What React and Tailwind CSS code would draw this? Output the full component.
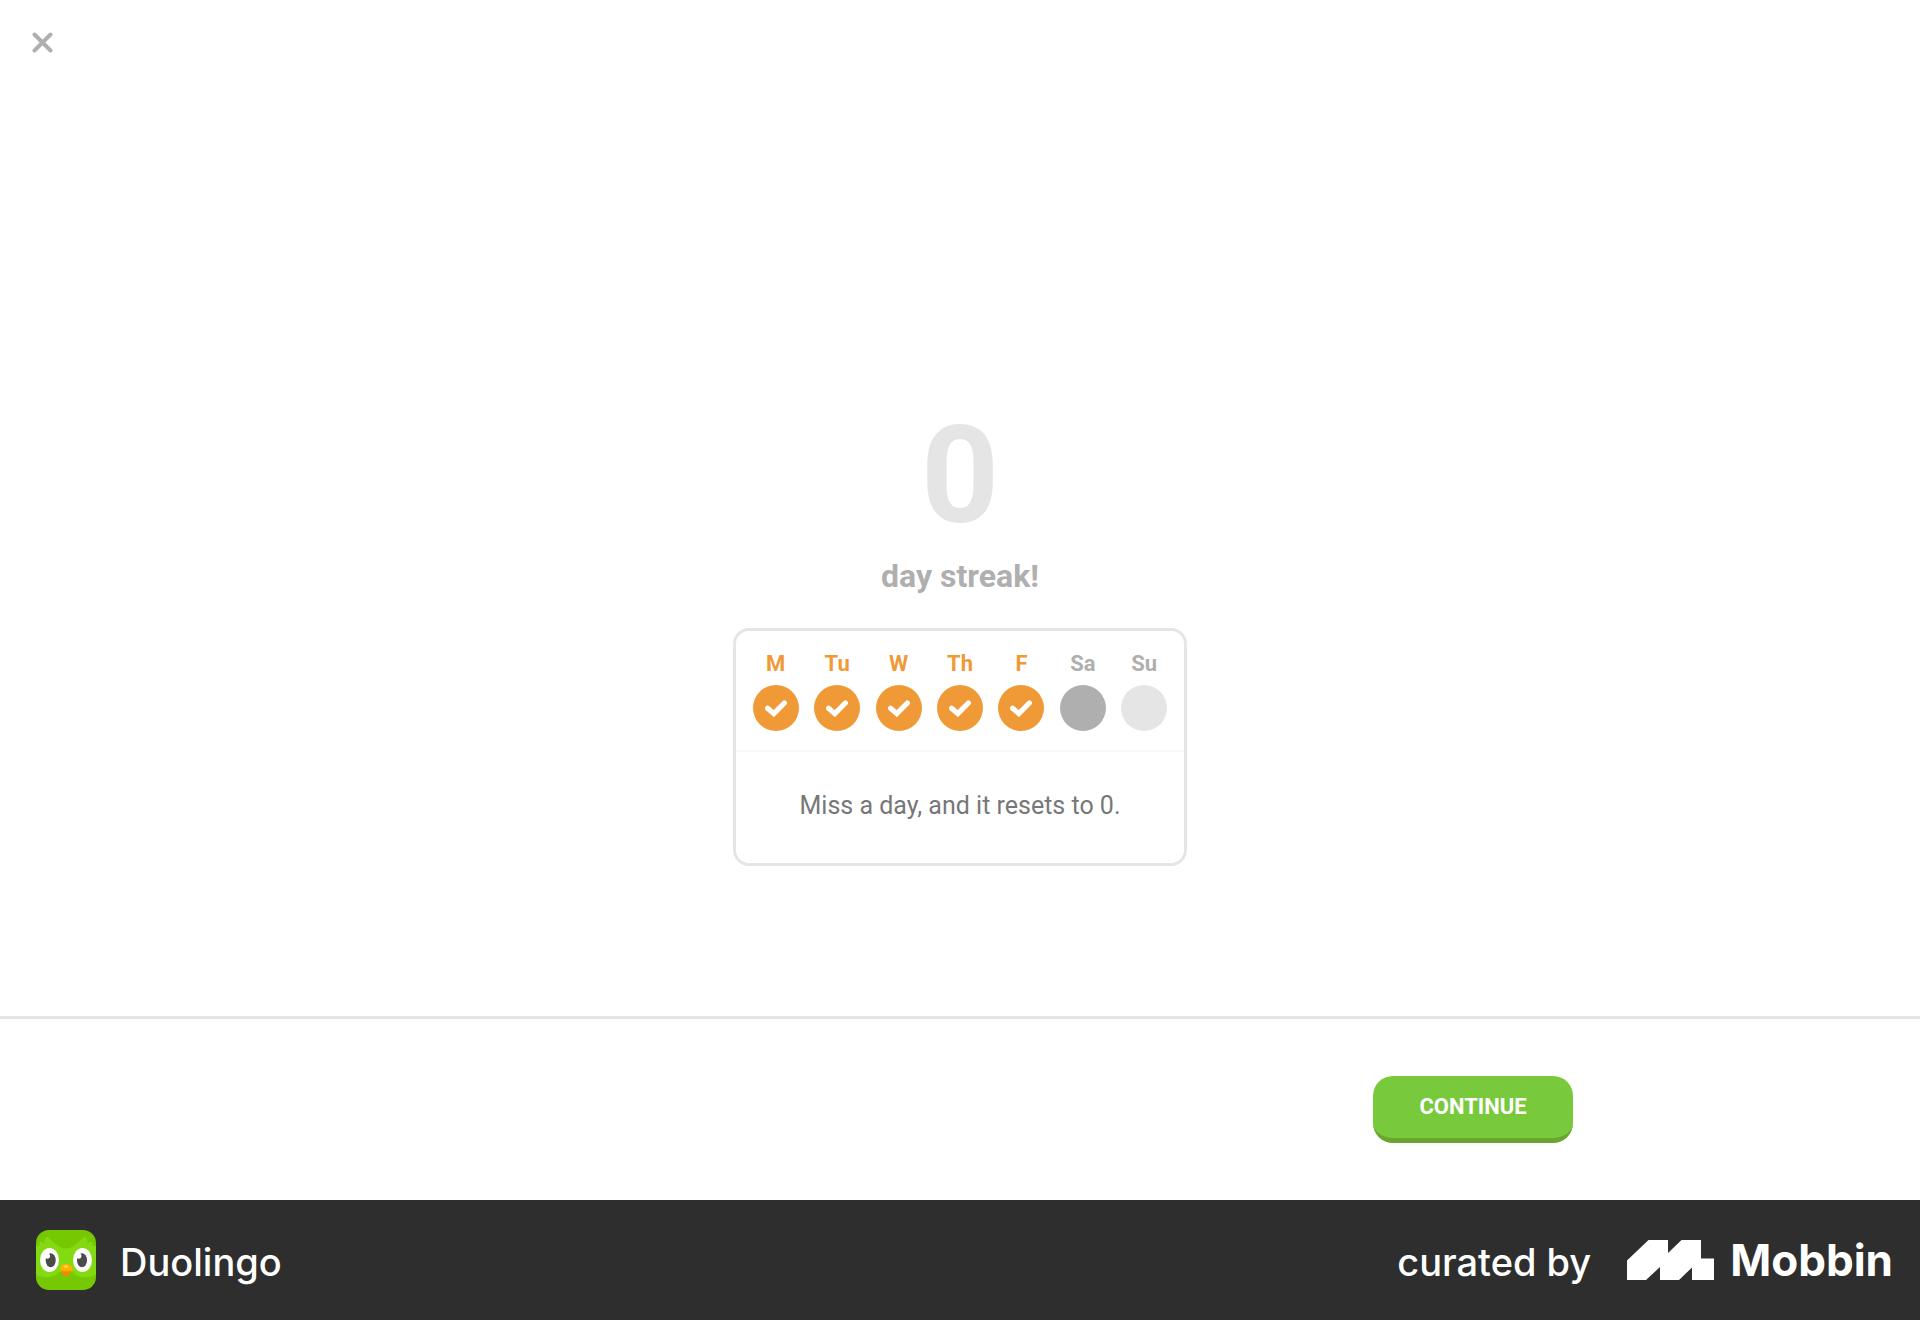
const days = [
  { label: "M", state: "done" },
  { label: "Tu", state: "done" },
  { label: "W", state: "done" },
  { label: "Th", state: "done" },
  { label: "F", state: "done" },
  { label: "Sa", state: "today" },
  { label: "Su", state: "upcoming" },
];

const labelColor = {
  done: "text-[#f09a37]",
  today: "text-[#afafaf]",
  upcoming: "text-[#afafaf]",
};

const dotColor = {
  done: "bg-[#f09a37]",
  today: "bg-[#afafaf]",
  upcoming: "bg-[#e5e5e5]",
};

function CheckMark() {
  return (
    <svg width="22" height="18" viewBox="0 0 22 18" fill="none" aria-hidden="true">
      <path d="M2.600 9.200 L8.800 14.600 L19.400 4" stroke="#fff" strokeWidth="5.200" strokeLinecap="round" />
    </svg>
  );
}

function OwlIcon() {
  return (
    <svg width="60" height="60" viewBox="0 0 60 60" aria-hidden="true">
      <defs>
        <clipPath id="owl-tile">
          <rect width="60" height="60" rx="13" />
        </clipPath>
      </defs>
      <g clipPath="url(#owl-tile)">
        <rect width="60" height="60" fill="#75c802" />
        <path
          d="M0 16 L3.5 16 C3 13 4 11 5.5 11.5 L8.5 14 C8 10 9.5 6.5 12 7 C17 11 22 18.500 30 18.500 C38 18.500 43 11 48 7 C50.500 6.500 52 10 51.500 14 L54.500 11.500 C56 11 57 13 56.500 16 L60 16 L60 44 C54 49 41 48 37 42 L23 42 C19 48 6 49 0 44 Z"
          fill="#84da10"
        />
        <ellipse cx="13.500" cy="30" rx="9.500" ry="12" fill="#fff" />
        <ellipse cx="46.500" cy="30" rx="9.500" ry="12" fill="#fff" />
        <ellipse cx="14.700" cy="30.300" rx="5" ry="7" fill="#4b4b4b" />
        <ellipse cx="46" cy="30.300" rx="5" ry="7" fill="#4b4b4b" />
        <circle cx="11.300" cy="26" r="2.700" fill="#fff" />
        <circle cx="42.700" cy="26" r="2.700" fill="#fff" />
        <path d="M25 38 L35.500 38 C35.500 43 33.500 46 30.200 46 C27 46 25 43 25 38 Z" fill="#f08a00" />
        <path d="M24 38.500 C24 36 27 34 30 34 C33 34 36.500 36 36.500 38.500 C36.500 41 33 41.300 30.200 41.300 C27 41.300 24 41 24 38.500 Z" fill="#ffb100" />
        <ellipse cx="30" cy="36.500" rx="2.200" ry="1.600" fill="#ffd541" />
      </g>
    </svg>
  );
}

function MobbinMark() {
  return (
    <svg width="87" height="40" viewBox="0 0 87 40" aria-hidden="true">
      <path
        d="M0 20.500 L21.500 0 H41 V13 L54.500 0 H74 V18.500 H87 V40 H65 V27.500 L52 40 H33 V27 L19 40 H0 Z"
        fill="#fff"
      />
    </svg>
  );
}

export default function App() {
  return (
    <div className="flex min-h-screen flex-col bg-white font-['Roboto',sans-serif]">
      <header className="flex p-8">
        <button type="button" aria-label="Close" className="block">
          <svg width="21" height="21" viewBox="0 0 21 21" fill="none" aria-hidden="true">
            <path d="M2.500 2.500 L18.500 18.500 M18.500 2.500 L2.500 18.500" stroke="#afafaf" strokeWidth="4" strokeLinecap="round" />
          </svg>
        </button>
      </header>

      <main className="flex flex-1 flex-col items-center justify-end pb-[150px]">
        <h1 className="flex flex-col items-center font-bold">
          <span className="text-[136px] leading-[136px] text-[#e5e5e5]">0</span>
          <span className="mt-3.5 text-[32px] leading-9 text-[#afafaf]">day streak!</span>
        </h1>

        <section className="mt-[34px] w-full max-w-[454px] rounded-2xl border-3 border-[#e5e5e5]">
          <ul className="grid grid-cols-7 border-b-2 border-[#f7f7f7] px-[9px] pt-5 pb-[19px]">
            {days.map((day) => (
              <li key={day.label} className="flex flex-col items-center gap-2">
                <span className={`text-[22px] leading-[26px] font-bold ${labelColor[day.state]}`}>{day.label}</span>
                <span className={`flex size-[46px] items-center justify-center rounded-full ${dotColor[day.state]}`}>
                  {day.state === "done" && <CheckMark />}
                </span>
              </li>
            ))}
          </ul>
          <p className="pt-[38px] pb-[41px] text-center text-[25px] leading-8 text-[#777777]">
            Miss a day, and it resets to 0.
          </p>
        </section>
      </main>

      <div className="border-t-3 border-[#e5e5e5] py-[57px]">
        <div className="mx-auto flex max-w-[1226px] justify-end">
          <button
            type="button"
            className="h-[67px] w-[200px] rounded-[20px] border-b-5 border-[#6ba52f] bg-[#78c93c] text-[22px] leading-7 font-bold text-white"
          >
            CONTINUE
          </button>
        </div>
      </div>

      <footer className="flex h-[120px] items-center justify-between bg-[#2e2e2e] pr-[27px] pl-9 font-['Inter',sans-serif] text-white">
        <div className="flex items-center gap-6">
          <OwlIcon />
          <span className="pt-1 text-[38px] leading-[48px] font-medium">Duolingo</span>
        </div>
        <div className="flex items-center">
          <span className="pt-1 text-[38px] leading-[48px] font-medium">curated by</span>
          <a href="#mobbin" className="ml-9 flex items-center gap-4">
            <MobbinMark />
            <span className="text-[44px] leading-[48px] font-bold">Mobbin</span>
          </a>
        </div>
      </footer>
    </div>
  );
}
